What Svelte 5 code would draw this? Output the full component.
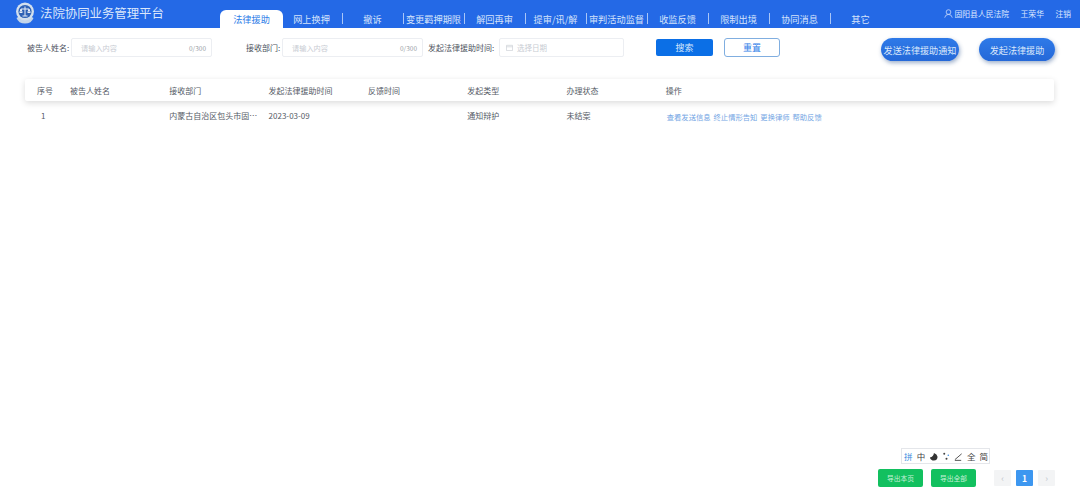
<script lang="ts">
    const tabs = ['法律援助', '网上换押', '撤诉', '变更羁押期限', '解回再审', '提审/讯/解', '审判活动监督', '收监反馈', '限制出境', '协同消息', '其它'];
    const columns = ['序号', '被告人姓名', '接收部门', '发起法律援助时间', '反馈时间', '发起类型', '办理状态', '操作'];
    const actions = ['查看发送信息', '终止情形告知', '更换律师', '帮助反馈'];
</script>

<div class="page">
    <header class="topbar">
        <div class="brand">
            <svg class="emblem" viewBox="0 0 20 22" width="20" height="22" aria-hidden="true">
                <path d="M1.5 16 Q3.5 21.5 10 21.5 Q16.5 21.5 18.5 16 L15 14 H5 Z" fill="#c3d5ea" />
                <circle cx="10" cy="9.5" r="9" fill="#d3e0ee" />
                <circle cx="10" cy="9.5" r="6.6" fill="#2f62b5" />
                <path d="M10 4.5 V14 M6 7 H14 M6 7 L4.8 10.5 H7.2 Z M14 7 L12.8 10.5 H15.2 Z M7.5 14 H12.5" stroke="#e8eff8" stroke-width="1" fill="none" />
            </svg>
            <span>法院协同业务管理平台</span>
        </div>
        <nav class="tabs">
            {#each tabs as tab, i}
                <div class="tab" class:active={i === 0} class:plain={i === 0 || i === tabs.length - 1}>{tab}</div>
            {/each}
        </nav>
        <div class="user">
            <svg viewBox="0 0 10 10" width="9" height="9" aria-hidden="true">
                <circle cx="5" cy="3.4" r="2.6" fill="none" stroke="#dce8ff" stroke-width="0.8" />
                <path d="M0.8 9.6 Q1.4 6 5 6 Q8.6 6 9.2 9.6" fill="none" stroke="#dce8ff" stroke-width="0.8" />
            </svg>
            <span class="court">固阳县人民法院</span>
            <span>王荣华</span>
            <span>注销</span>
        </div>
    </header>

    <section class="filters">
        <label class="lbl first" for="name">被告人姓名:</label>
        <div class="field wide" id="name"><span>请输入内容</span><em>0/300</em></div>
        <label class="lbl second" for="dept">接收部门:</label>
        <div class="field wide" id="dept"><span>请输入内容</span><em>0/300</em></div>
        <label class="lbl third" for="date">发起法律援助时间:</label>
        <div class="field date" id="date">
            <svg viewBox="0 0 8 8" width="7" height="7" aria-hidden="true">
                <path d="M0.5 1.5 H7.5 V7.5 H0.5 Z M0.5 3.2 H7.5" fill="none" stroke="#ccd0d6" stroke-width="0.8" />
            </svg>
            <span>选择日期</span>
        </div>
        <button class="search">搜索</button>
        <button class="reset">重置</button>
        <button class="pill notify">发送法律援助通知</button>
        <button class="pill start">发起法律援助</button>
    </section>

    <main class="table">
        <div class="row head">
            {#each columns as col}
                <div>{col}</div>
            {/each}
        </div>
        <div class="row body">
            <div class="num">1</div>
            <div></div>
            <div>内蒙古自治区包头市固…</div>
            <div>2023-03-09</div>
            <div></div>
            <div>通知辩护</div>
            <div>未结案</div>
            <div class="actions">
                {#each actions as action}
                    <span>{action}</span>
                {/each}
            </div>
        </div>
    </main>

    <footer class="foot">
        <button class="export">导出本页</button>
        <button class="export">导出全部</button>
        <div class="pager">
            <span class="step">‹</span>
            <span class="current">1</span>
            <span class="step">›</span>
        </div>
    </footer>

    <div class="ime">
        <span class="on">拼</span>
        <span>中</span>
        <svg viewBox="0 0 10 10" width="9" height="9" aria-hidden="true">
            <path d="M5.5 1 Q5 5 1 6 Q2 9.5 5.5 9.5 Q9.5 9 9.5 5.2 Q9 2 5.5 1 Z" fill="#333" />
        </svg>
        <svg viewBox="0 0 10 10" width="9" height="9" aria-hidden="true">
            <circle cx="2.5" cy="2" r="1.1" fill="#444" />
            <circle cx="7" cy="3.6" r="0.9" fill="#3d8fe0" />
            <circle cx="5" cy="7.5" r="1.1" fill="#444" />
        </svg>
        <svg viewBox="0 0 10 10" width="9" height="9" aria-hidden="true">
            <path d="M1 8.5 L8.5 2 M1 9.3 H8" stroke="#444" stroke-width="1" fill="none" />
        </svg>
        <span>全</span>
        <span>简</span>
    </div>
</div>

<style>
    :global(body) {
        margin: 0;
        background: #fff;
    }
    .page {
        position: relative;
        width: 1080px;
        height: 498px;
        display: flex;
        flex-direction: column;
        overflow: hidden;
        font-family: "Noto Sans CJK SC", "Noto Sans", sans-serif;
        color: #555b66;
        font-size: 8px;
    }
    .topbar {
        height: 28px;
        flex: none;
        display: flex;
        background: #2469e6;
        color: #dce8ff;
    }
    .brand {
        width: 220px;
        display: flex;
        align-items: center;
        gap: 5px;
        padding-left: 15px;
        padding-bottom: 2px;
        box-sizing: border-box;
        font-size: 12.4px;
        color: #dbe7fb;
    }
    .emblem {
        flex: none;
    }
    .tabs {
        display: flex;
        align-items: flex-end;
        width: 672px;
    }
    .tab {
        width: 61px;
        height: 18px;
        flex: none;
        display: flex;
        align-items: center;
        justify-content: center;
        font-size: 9.2px;
        white-space: nowrap;
        color: #d5e3fb;
        position: relative;
    }
    .tab:not(.plain)::after {
        content: "";
        position: absolute;
        right: -1px;
        top: 3px;
        height: 11px;
        width: 1px;
        background: #a9c6f7;
    }
    .tab.active {
        width: 63px;
        margin-right: -2px;
        background: #fff;
        color: #2f7ee8;
        border-radius: 6px 6px 0 0;
    }
    .user {
        flex: 1;
        display: flex;
        align-items: center;
        padding: 0 0 1px 52px;
        font-size: 7.8px;
        gap: 11.5px;
        white-space: nowrap;
    }
    .user svg {
        margin-right: -9px;
    }
    .court {
        margin-left: -1px;
    }
    .filters {
        height: 51px;
        flex: none;
        display: flex;
        align-items: flex-start;
        padding-top: 10px;
        box-sizing: border-box;
    }
    .lbl {
        font-size: 8px;
        line-height: 19px;
        white-space: nowrap;
        color: #4d535e;
    }
    .first {
        margin-left: 27px;
        width: 44px;
    }
    .second {
        margin-left: 34px;
        width: 36px;
    }
    .third {
        margin-left: 5px;
        width: 71px;
    }
    .field {
        height: 19px;
        box-sizing: border-box;
        border: 1px solid #eceef2;
        border-radius: 2px;
        display: flex;
        align-items: center;
        color: #c8ccd3;
        font-size: 7.2px;
    }
    .wide {
        width: 141px;
        padding: 0 5px 0 9px;
        justify-content: space-between;
    }
    .wide em {
        font-style: normal;
        color: #9aa0a8;
        font-size: 6.5px;
    }
    .date {
        width: 125px;
        padding-left: 6px;
        gap: 4px;
        font-size: 7.5px;
    }
    button {
        font-family: inherit;
        border: none;
        padding: 0;
        white-space: nowrap;
    }
    .search {
        margin: 1px 0 0 32px;
        width: 57px;
        height: 17px;
        background: #0b6fe6;
        color: #d8e8fc;
        border-radius: 2px;
        font-size: 9px;
    }
    .reset {
        margin-left: 11px;
        width: 56px;
        height: 19px;
        background: #fff;
        border: 1px solid #80aee0;
        color: #2f7ee8;
        border-radius: 3px;
        font-size: 9px;
    }
    .pill {
        height: 23px;
        border-radius: 12px;
        background: linear-gradient(#2f7ae8, #2468d8);
        color: #dbe8fb;
        font-size: 9.1px;
        box-shadow: 1px 2px 4px rgba(40, 80, 140, 0.45);
    }
    .notify {
        margin-left: 101px;
        width: 78px;
    }
    .start {
        margin-left: 20px;
        width: 76px;
    }
    .table {
        flex: 1;
        margin: 0 26px 0 25px;
    }
    .row {
        display: grid;
        grid-template-columns: 45px 99.3px 99.3px 99.3px 99.3px 99.3px 99.3px 1fr;
        align-items: center;
        white-space: nowrap;
    }
    .head {
        height: 22px;
        padding-top: 1px;
        box-sizing: border-box;
        background: #fff;
        box-shadow: 0 2px 6px rgba(0, 0, 0, 0.14);
        border-radius: 2px;
    }
    .head > div:first-child {
        padding-left: 12px;
    }
    .num {
        padding-left: 16px;
    }
    .body {
        height: 29px;
    }
    .actions {
        display: flex;
        gap: 3px;
        padding: 2px 0 0 1px;
        color: #74a6e4;
        font-size: 7.3px;
    }
    .foot {
        height: 29px;
        flex: none;
        display: flex;
        align-items: flex-start;
        padding-left: 878px;
        box-sizing: border-box;
    }
    .export {
        width: 45px;
        height: 18px;
        background: #12c05f;
        color: #c6f0d8;
        border-radius: 2px;
        font-size: 6.8px;
        margin-right: 8px;
    }
    .pager {
        display: flex;
        gap: 5px;
        margin: 1px 0 0 10px;
    }
    .pager span {
        width: 17px;
        height: 16px;
        display: flex;
        align-items: center;
        justify-content: center;
        border-radius: 1px;
    }
    .step {
        background: #f3f4f5;
        color: #c2c6cc;
        font-size: 9px;
    }
    .current {
        background: #3d97f0;
        color: #fff;
        font-weight: 700;
        font-size: 8.5px;
    }
    .ime {
        position: absolute;
        left: 901px;
        top: 448px;
        width: 89px;
        height: 16px;
        box-sizing: border-box;
        border: 1px solid #e4e6ea;
        background: #fff;
        display: grid;
        grid-template-columns: repeat(7, 12.6px);
        justify-items: center;
        align-items: center;
        color: #444;
        font-size: 8.5px;
    }
    .ime .on {
        color: #3d8fe0;
    }
</style>
